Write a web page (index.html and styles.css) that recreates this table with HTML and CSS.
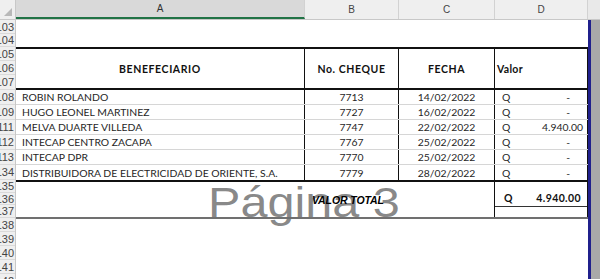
FILE: index.html
```html
<!DOCTYPE html>
<html lang="es">
<head>
<meta charset="utf-8">
<title>Hoja - Página 3</title>
<link rel="stylesheet" href="styles.css">
</head>
<body>
<div class="app">
  <div class="colhdr">
    <div class="corner"><svg width="15" height="19" viewBox="0 0 15 19"><polygon points="12,8 12,16 4,16" fill="#b8b8b8"/></svg></div>
    <div class="ch sel a">A</div>
    <div class="ch b">B</div>
    <div class="ch c">C</div>
    <div class="ch d">D</div>
    <div class="ch rest"></div>
  </div>
  <div class="main">
    <div class="rowhdr">
      <div class="rn h14">103</div>
      <div class="rn h13">104</div>
      <div class="rn h14">105</div>
      <div class="rn h14">106</div>
      <div class="rn h15">107</div>
      <div class="rn h15">108</div>
      <div class="rn h15">109</div>
      <div class="rn h15">111</div>
      <div class="rn h15">112</div>
      <div class="rn h15">113</div>
      <div class="rn h15">134</div>
      <div class="rn h13">135</div>
      <div class="rn h12">136</div>
      <div class="rn h13">137</div>
      <div class="rn h14">138</div>
      <div class="rn h14">139</div>
      <div class="rn h14">140</div>
      <div class="rn h14">141</div>
      <div class="rn h14">142</div>
    </div>
    <div class="sheet">
      <div class="blank-top"></div>
      <div class="thead">
        <div class="th">BENEFECIARIO</div>
        <div class="th">No. CHEQUE</div>
        <div class="th">FECHA</div>
        <div class="th valor">Valor</div>
      </div>
      <div class="tbody">
        <div class="row">
          <div class="td name">ROBIN ROLANDO</div>
          <div class="td ctr">7713</div>
          <div class="td ctr">14/02/2022</div>
          <div class="td val"><span>Q</span><span class="dash">-</span></div>
        </div>
        <div class="row">
          <div class="td name">HUGO LEONEL MARTINEZ</div>
          <div class="td ctr">7727</div>
          <div class="td ctr">16/02/2022</div>
          <div class="td val"><span>Q</span><span class="dash">-</span></div>
        </div>
        <div class="row">
          <div class="td name">MELVA DUARTE VILLEDA</div>
          <div class="td ctr">7747</div>
          <div class="td ctr">22/02/2022</div>
          <div class="td val"><span>Q</span><span>4.940.00</span></div>
        </div>
        <div class="row">
          <div class="td name">INTECAP CENTRO ZACAPA</div>
          <div class="td ctr">7767</div>
          <div class="td ctr">25/02/2022</div>
          <div class="td val"><span>Q</span><span class="dash">-</span></div>
        </div>
        <div class="row">
          <div class="td name">INTECAP DPR</div>
          <div class="td ctr">7770</div>
          <div class="td ctr">25/02/2022</div>
          <div class="td val"><span>Q</span><span class="dash">-</span></div>
        </div>
        <div class="row">
          <div class="td name">DISTRIBUIDORA DE ELECTRICIDAD DE ORIENTE, S.A.</div>
          <div class="td ctr">7779</div>
          <div class="td ctr">28/02/2022</div>
          <div class="td val"><span>Q</span><span class="dash">-</span></div>
        </div>
      </div>
      <div class="total">
        <div class="tempty"></div>
        <div class="tlabel">VALOR TOTAL</div>
        <div class="tval">
          <div class="tval-top"><span>Q</span><span>4.940.00</span></div>
          <div class="tval-bot"></div>
        </div>
      </div>
      <div class="blank-bottom"></div>
    </div>
    <div class="pbreak"></div>
    <div class="offpage"></div>
  </div>
  <div class="watermark">Página 3</div>
</div>
</body>
</html>
```

FILE: styles.css
```css
* {
  box-sizing: border-box;
  margin: 0;
  padding: 0;
}

html, body {
  width: 600px;
  height: 279px;
  overflow: hidden;
  background: #ffffff;
}

body {
  font-family: "Liberation Sans", Arial, sans-serif;
}

.app {
  position: relative;
  width: 600px;
  height: 279px;
  display: flex;
  flex-direction: column;
  overflow: hidden;
}

/* column header */
.colhdr {
  display: flex;
  height: 20px;
  flex: 0 0 20px;
  background: #efefef;
  border-bottom: 1px solid #c8c8c8;
}

.corner {
  width: 16px;
  border-right: 1px solid #c8c8c8;
  display: flex;
  align-items: flex-end;
}

.ch {
  display: flex;
  align-items: center;
  justify-content: center;
  font-size: 10px;
  color: #444;
  border-right: 1px solid #d2d2d2;
}

.ch.sel {
  background: #d9d9d9;
  border-bottom: 2px solid #217346;
  color: #333;
}

.ch.a { width: 289px; }
.ch.b { width: 94px; }
.ch.c { width: 96px; }
.ch.d { width: 93px; }
.ch.rest { flex: 1; border-right: none; background: #e9e9e9; }

/* body */
.main {
  display: flex;
  flex: 1;
  min-height: 0;
  overflow: hidden;
}

.rowhdr {
  width: 16px;
  flex: 0 0 16px;
  background: #efefef;
  border-right: 1px solid #c8c8c8;
  overflow: hidden;
}

.rn {
  display: flex;
  align-items: center;
  justify-content: flex-end;
  padding-right: 1px;
  font-size: 11px;
  color: #444;
  white-space: nowrap;
  overflow: hidden;
  border-bottom: 1px solid #dadada;
}

.h12 { height: 12px; }
.h13 { height: 13px; }
.h14 { height: 14px; }
.h15 { height: 15px; }

.sheet {
  width: 572px;
  flex: 0 0 572px;
  display: flex;
  flex-direction: column;
}

.pbreak {
  width: 3px;
  flex: 0 0 3px;
  background: #20208c;
}

.offpage {
  flex: 1;
  background: #a9a9a9;
}

.blank-top {
  height: 27px;
  flex: 0 0 27px;
}

.thead,
.row,
.total {
  display: grid;
  grid-template-columns: 289px 94px 96px 93px;
}

.thead {
  height: 43px;
  flex: 0 0 43px;
  border-top: 2px solid #111;
  border-bottom: 2px solid #111;
}

.th {
  display: flex;
  align-items: center;
  justify-content: center;
  border-right: 1px solid #111;
  font-family: Lato, "Liberation Sans", sans-serif;
  font-weight: 700;
  font-size: 10.5px;
  letter-spacing: 0.6px;
  color: #111;
}

.th.valor {
  justify-content: flex-start;
  padding-left: 2px;
  letter-spacing: 0.3px;
}

.tbody {
  display: flex;
  flex-direction: column;
}

.row {
  height: 15px;
  border-bottom: 1px solid #d6d6d6;
}

.row:last-child {
  border-bottom: none;
}

.td {
  display: flex;
  align-items: center;
  border-right: 1px solid #111;
  font-family: Lato, "Liberation Sans", sans-serif;
  font-size: 10.4px;
  color: #262626;
  white-space: nowrap;
}

.td.name {
  padding-left: 6px;
}

.td.ctr {
  justify-content: center;
}

.td.val {
  justify-content: space-between;
  padding-left: 7px;
  padding-right: 4px;
}

.dash {
  margin-right: 13px;
}

.total {
  height: 39px;
  flex: 0 0 39px;
  border-top: 2px solid #111;
  border-bottom: 2px solid #707070;
}

.tlabel {
  grid-column: 2 / 4;
  position: relative;
  z-index: 2;
  display: flex;
  align-items: center;
  padding-left: 7px;
  border-right: 1px solid #111;
  font-family: "Liberation Sans", Arial, sans-serif;
  font-style: italic;
  font-weight: 700;
  font-size: 10.5px;
  color: #000;
  letter-spacing: -0.1px;
}

.tval {
  display: flex;
  flex-direction: column;
  border-right: 1px solid #111;
}

.tval-top {
  height: 25px;
  display: flex;
  justify-content: space-between;
  align-items: flex-end;
  padding: 0 6px 2px 9px;
  border-bottom: 1px solid #333;
  font-family: Lato, "Liberation Sans", sans-serif;
  font-weight: 700;
  font-size: 10.5px;
  letter-spacing: 0.4px;
  color: #111;
  position: relative;
  z-index: 2;
}

.tval-bot {
  flex: 1;
}

.blank-bottom {
  flex: 1;
}

.watermark {
  position: absolute;
  left: 208px;
  top: 181px;
  font-family: "Liberation Sans", Arial, sans-serif;
  font-size: 43px;
  line-height: 43px;
  color: rgba(110, 110, 110, 0.82);
  white-space: nowrap;
  transform: scaleX(1.13);
  transform-origin: left top;
  pointer-events: none;
  z-index: 1;
}
```
